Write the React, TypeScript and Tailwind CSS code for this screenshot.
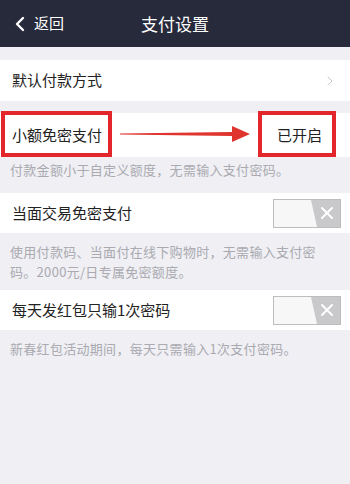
import { ChevronLeft, ChevronRight } from 'lucide-react';

const Toggle = () => (
  <svg width="68" height="29" viewBox="0 0 68 29" className="block">
    <rect x="0.5" y="0.5" width="67" height="28" fill="#c9c9cb" stroke="#bdbdbf" />
    <polygon points="1,1 38,1 44,28 1,28" fill="#f7f7f7" />
    <path d="M49 9 L59 19 M59 9 L49 19" stroke="#ffffff" strokeWidth="2" strokeLinecap="round" />
  </svg>
);

const Caption = ({ children, top = 'pt-[9px]' }: { children: React.ReactNode; top?: string }) => (
  <p className={`px-[10px] ${top} text-[13px] leading-[20px] text-[#aaaab0] tracking-[0.3px]`}>{children}</p>
);

export default function App() {
  return (
    <div
      className="w-[350px] h-[484px] bg-[#efeff4] overflow-hidden"
      style={{ fontFamily: '"Noto Sans CJK SC", "Noto Sans", sans-serif' }}
    >
      {/* header */}
      <div className="h-[47px] bg-[#262a3b] flex items-center relative">
        <div className="flex items-center pl-[8px] text-white">
          <ChevronLeft className="w-[24px] h-[24px]" strokeWidth={2.4} />
          <span className="ml-[2px] text-[15px]">返回</span>
        </div>
        <span className="absolute left-0 right-0 text-center text-white text-[17px] pointer-events-none">支付设置</span>
      </div>

      <div className="h-[13px]" />

      {/* default payment */}
      <div className="h-[41px] bg-white flex items-center justify-between px-[12px]">
        <span className="text-[15px] text-[#222]">默认付款方式</span>
        <ChevronRight className="w-[16px] h-[16px] text-[#c8c8cc]" strokeWidth={1.5} />
      </div>

      <div className="h-[12px]" />

      {/* small amount */}
      <div className="relative h-[44px] bg-white flex items-center justify-between pl-[12px] pr-[28px]">
        <span className="text-[15px] text-[#222]">小额免密支付</span>
        <span className="text-[15px] text-[#222]">已开启</span>
        <div className="absolute left-[1px] top-[-2px] w-[111px] h-[46px] border-[4px] border-[#e2262b]" />
        <div className="absolute left-[258px] top-[-2px] w-[78px] h-[46px] border-[4px] border-[#e2262b]" />
        <svg className="absolute left-[118px] top-[12px]" width="134" height="18" viewBox="0 0 134 18">
          <polygon points="2,8.5 114,7 114,1 132,9 114,17 114,11 2,9.5" fill="#e0342f" />
        </svg>
      </div>
      <div className="h-[36px]">
        <Caption top="pt-[3px]">付款金额小于自定义额度，无需输入支付密码。</Caption>
      </div>

      {/* face to face */}
      <div className="h-[40px] bg-white flex items-center justify-between pl-[12px] pr-[9px]">
        <span className="text-[15px] text-[#222]">当面交易免密支付</span>
        <Toggle />
      </div>
      <div className="h-[57px]">
        <Caption>
          使用付款码、当面付在线下购物时，无需输入支付密码。2000元/日专属免密额度。
        </Caption>
      </div>

      {/* red packet */}
      <div className="h-[40px] bg-white flex items-center justify-between pl-[12px] pr-[9px]">
        <span className="text-[15px] text-[#222]">每天发红包只输1次密码</span>
        <Toggle />
      </div>
      <div>
        <Caption>新春红包活动期间，每天只需输入1次支付密码。</Caption>
      </div>
    </div>
  );
}
